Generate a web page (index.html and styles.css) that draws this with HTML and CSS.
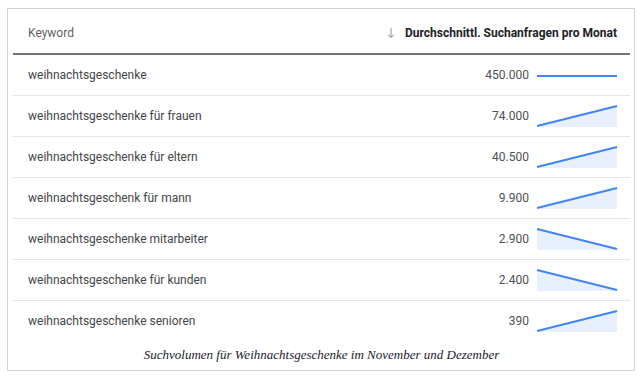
FILE: index.html
```html
<!DOCTYPE html>
<html lang="de">
<head>
<meta charset="utf-8">
<link rel="stylesheet" href="styles.css">
</head>
<body>
<figure class="card">
  <div class="table">
    <div class="row head">
      <div class="kw">Keyword</div>
      <div class="vol-head"><span class="arrow">↓</span><span class="vol-title">Durchschnittl. Suchanfragen pro Monat</span></div>
    </div>
    <div class="row">
      <div class="kw">weihnachtsgeschenke</div>
      <div class="num">450.000</div>
      <svg class="spark" viewBox="0 0 80 22"><line x1="0" y1="12" x2="80" y2="12" class="ln"/></svg>
    </div>
    <div class="row">
      <div class="kw">weihnachtsgeschenke für frauen</div>
      <div class="num">74.000</div>
      <svg class="spark" viewBox="0 0 80 22"><polygon class="fill" points="0,21 80,1 80,22 0,22"/><polyline class="ln" points="0,21 80,1"/></svg>
    </div>
    <div class="row">
      <div class="kw">weihnachtsgeschenke für eltern</div>
      <div class="num">40.500</div>
      <svg class="spark" viewBox="0 0 80 22"><polygon class="fill" points="0,21 80,1 80,22 0,22"/><polyline class="ln" points="0,21 80,1"/></svg>
    </div>
    <div class="row">
      <div class="kw">weihnachtsgeschenk für mann</div>
      <div class="num">9.900</div>
      <svg class="spark" viewBox="0 0 80 22"><polygon class="fill" points="0,21 80,1 80,22 0,22"/><polyline class="ln" points="0,21 80,1"/></svg>
    </div>
    <div class="row">
      <div class="kw">weihnachtsgeschenke mitarbeiter</div>
      <div class="num">2.900</div>
      <svg class="spark" viewBox="0 0 80 22"><polygon class="fill" points="0,1 80,21 80,22 0,22"/><polyline class="ln" points="0,1 80,21"/></svg>
    </div>
    <div class="row">
      <div class="kw">weihnachtsgeschenke für kunden</div>
      <div class="num">2.400</div>
      <svg class="spark" viewBox="0 0 80 22"><polygon class="fill" points="0,1 80,21 80,22 0,22"/><polyline class="ln" points="0,1 80,21"/></svg>
    </div>
    <div class="row last">
      <div class="kw">weihnachtsgeschenke senioren</div>
      <div class="num">390</div>
      <svg class="spark" viewBox="0 0 80 22"><polygon class="fill" points="0,21 80,1 80,22 0,22"/><polyline class="ln" points="0,21 80,1"/></svg>
    </div>
  </div>
  <figcaption class="caption">Suchvolumen für Weihnachtsgeschenke im November und Dezember</figcaption>
</figure>
</body>
</html>
```

FILE: styles.css
```css
html, body {
  margin: 0;
  padding: 0;
  background: #ffffff;
}
body {
  width: 644px;
  height: 379px;
  overflow: hidden;
}
.card {
  margin: 8px 0 0 7px;
  width: 628px;
  height: 363px;
  box-sizing: border-box;
  border: 1px solid #d3d3d3;
  padding: 3px 4px 0 5px;
  display: flex;
  flex-direction: column;
}
.table {
  font-family: Roboto, "Liberation Sans", sans-serif;
  font-size: 12px;
  color: #444649;
}
.row {
  display: grid;
  grid-template-columns: 1fr auto 80px;
  column-gap: 8px;
  align-items: center;
  height: 40px;
  padding: 0 13px 0 15px;
  border-bottom: 1px solid #e6e6e6;
}
.row.last {
  border-bottom: none;
}
.row.head {
  height: 41px;
  grid-template-columns: 1fr auto;
  border-bottom: 2px solid #757575;
}
.head .kw {
  color: #5f6368;
}
.vol-head {
  display: flex;
  align-items: center;
  gap: 8px;
}
.arrow {
  color: #a8acb0;
  font-family: "DejaVu Sans", sans-serif;
  font-size: 14px;
  line-height: 1;
}
.vol-title {
  font-weight: bold;
  color: #202124;
}
.num {
  text-align: right;
  color: #4d5156;
}
.spark {
  width: 80px;
  height: 22px;
  display: block;
  overflow: visible;
}
.spark .fill {
  fill: #e8f0fe;
}
.spark .ln {
  fill: none;
  stroke: #4285f4;
  stroke-width: 2;
}
.caption {
  margin: 0;
  text-align: center;
  font-family: "Liberation Serif", serif;
  font-style: italic;
  font-size: 13px;
  color: #1a1a2e;
  padding-top: 6px;
}
```
